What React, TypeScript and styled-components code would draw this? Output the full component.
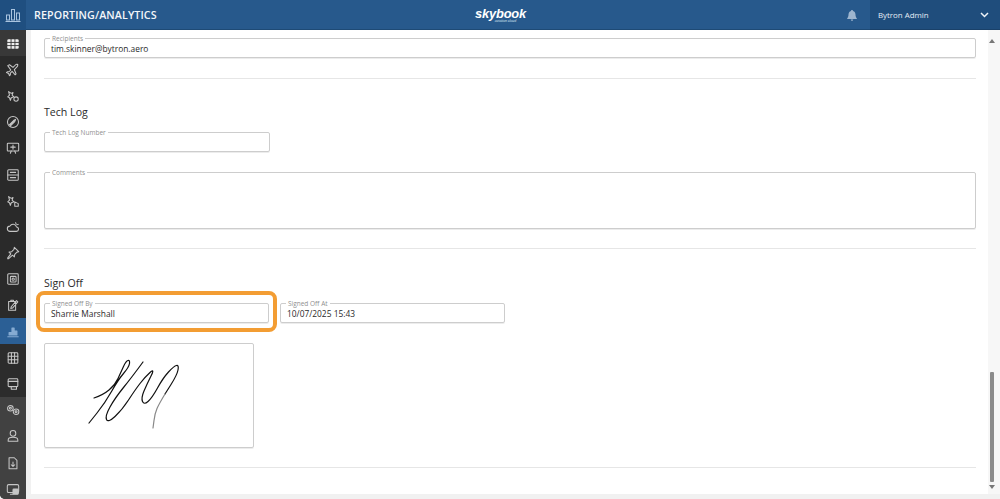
import React from "react";
import styled, { createGlobalStyle } from "styled-components";

const Global = createGlobalStyle`
  html, body { margin: 0; padding: 0; height: 100%; overflow: hidden; background: #f2f2f2; }
  #root { height: 100%; }
  * { box-sizing: border-box; }
`;

const Page = styled.div`
  width: 1000px; height: 499px; display: grid;
  grid-template-rows: 30px 1fr; font-family: "Open Sans", "Liberation Sans", sans-serif;
  color: #2e2e2e; overflow: hidden; background: #f1f1f1;
`;
const Header = styled.header`
  display: flex; align-items: center; background: #27598c;
  box-shadow: inset 0 -1px 0 #1e4a75;
`;
const LogoCell = styled.div`
  width: 26px; height: 30px; display: flex; align-items: center; justify-content: center;
  background: #1f4f80;
`;
const Title = styled.h1`
  margin: 0 0 0 8px; font-size: 10.7px; font-weight: 600; color: #f3f6fa; letter-spacing: .1px; width: 372px;
`;
const Brand = styled.div`
  width: 160px; margin-left: 10px; display: flex; flex-direction: column; align-items: center; color: #fff;
  font-family: "Liberation Sans", sans-serif; font-style: italic; font-weight: 700; font-size: 12.9px; line-height: 11px; letter-spacing: -.2px;
  padding-left: 9px;
`;
const BrandSub = styled.span`
  font-size: 3.5px; line-height: 4px; font-weight: 400; letter-spacing: 0; margin-left: 10px; color: #dbe6f2;
`;
const Bell = styled.div`
  margin-left: auto; width: 40px; padding-left: 4px; display: flex; justify-content: center; color: #9db5cf;
`;
const User = styled.div`
  width: 130px; height: 30px; background: #1f4d7c; display: flex; align-items: center; justify-content: space-between;
  padding: 0 11px 0 8px; font-size: 7.9px; color: #e5ecf4; box-shadow: inset 0 -1px 0 #1a4169;
`;
const Body = styled.div`
  display: grid; grid-template-columns: 26px 1fr; min-height: 0;
`;
const Side = styled.nav`
  display: flex; flex-direction: column; background: #2a2a2a; border-bottom-left-radius: 5px; overflow: hidden;
`;
const Item = styled.div<{ $tone: string; $active?: boolean; $first?: boolean }>`
  height: 26.2px; flex: none; display: flex; align-items: center; justify-content: center; padding-top: 1px;
  background: ${p => p.$tone}; color: ${p => (p.$active ? "#86abd2" : p.$first ? "#f0f0f0" : "#c6c6c6")};
`;
const Main = styled.main`
  margin: 0 0 5px 5px; background: #fff; position: relative; overflow: hidden;
  padding-top: 6px; display: flex; flex-direction: column;
`;
const Scroller = styled.div`
  flex: 1; min-height: 0; overflow: hidden; padding: 2px 24px 0 13px; display: flex; flex-direction: column;
`;
const Field = styled.div<{ $w?: number; $h?: number }>`
  position: relative; width: ${p => (p.$w ? p.$w + "px" : "100%")}; height: ${p => p.$h ?? 20}px; flex: none;
  border: 1px solid #cdcdcd; border-radius: 2px; box-shadow: 0 1px 0 #ececec; padding: 3px 6px 0; font-size: 8.4px; line-height: 13px; color: #2a2a2a;
`;
const Label = styled.span`
  position: absolute; left: 5px; top: -4px; padding: 0 2px; background: #fff; font-size: 6.5px; line-height: 7px; color: #8f8f8f;
`;
const CommentsField = styled(Field)`
  margin-top: 20px;
`;
const Rule = styled.hr<{ $top: number; $bottom: number }>`
  width: 100%; height: 1px; border: 0; flex: none; background: #e6e6e6; margin: ${p => p.$top}px 0 ${p => p.$bottom}px;
`;
const Heading = styled.h2<{ $bottom: number }>`
  margin: 0 0 ${p => p.$bottom}px; height: 16px; font-size: 10.6px; line-height: 16px; font-weight: 400; color: #2b2b2b;
`;
const Row = styled.div`
  display: flex; gap: 11px; position: relative;
`;
const Highlight = styled.div`
  position: absolute; left: -8px; top: -12px; width: 241px; height: 41px; border: 4px solid #f39d33; border-radius: 8px; pointer-events: none;
`;
const Signature = styled.div`
  width: 210px; height: 105px; flex: none; margin-top: 20px; border: 1px solid #cdcdcd; border-radius: 2px; box-shadow: 0 1px 0 #ececec;
  display: flex;
`;
const ScrollBar = styled.div`
  position: absolute; right: 0; top: 0; bottom: 0; width: 12px; background: #f7f7f7;
`;
const Thumb = styled.div`
  position: absolute; left: 2px; width: 4px; top: 342px; height: 110px; background: #8b8b8b; border-radius: 1px;
`;
const Arrow = styled.div<{ $down?: boolean }>`
  position: absolute; left: 1px; width: 0; height: 0; border-left: 3px solid transparent; border-right: 3px solid transparent;
  ${p => (p.$down ? "top: 455px; border-top: 4px solid #777;" : "top: 9px; border-bottom: 4px solid #777;")}
`;

const S = (p: { children: React.ReactNode; size?: number }) => (
  <svg width={p.size ?? 14} height={p.size ?? 14} viewBox="0 0 16 16" fill="none" stroke="currentColor" strokeWidth="1.2" strokeLinecap="round" strokeLinejoin="round">{p.children}</svg>
);
const plane = "M2 3l2-1 4 3 3-3c1-1 2.500-.5 2.500 0s0 1.500-1 2.500l-3 3 2 5-1 1-3.500-4-2 2v2l-1 1-1-2.500-2.500-1 1-1h2l2-2z";
const gears = <><circle cx="5" cy="6" r="3.200"/><circle cx="5" cy="6" r="1.100"/><circle cx="11.500" cy="10" r="3.200"/><circle cx="11.500" cy="10" r="1.100"/></>;
const icons: React.ReactNode[] = [
  <S><rect x="1.500" y="2.500" width="13" height="11" rx="1.500" fill="currentColor" stroke="none"/><path d="M1.500 6.200h13M1.500 9.800h13M5.800 2.500v11M10.200 2.500v11" stroke="#333" strokeWidth="1"/></S>,
  <S><path d={plane}/></S>,
  <S><path d="M3 3l3 2 2-1-1 3 2 2-3 1-1 3-1-3-2-1 2-2z"/><circle cx="11.500" cy="11.500" r="2.500"/></S>,
  <S><circle cx="8" cy="8" r="6.300"/><path d="M4 11l5-5 2-1-1 2.500-5 5" fill="currentColor"/></S>,
  <S><rect x="1.500" y="2.500" width="13" height="9" rx="1"/><path d="M5 14l1-2.500M11 14l-1-2.500M8 4.500v5M5.500 7h5"/></S>,
  <S><rect x="2" y="2" width="12" height="12" rx="1"/><path d="M2 8h12M5 5h6M5 11h6"/></S>,
  <S><path d="M3 3l3 2 2-1-1 3 2 2-3 1-1 3-1-3-2-1 2-2z"/><path d="M10 9l4 2v3h-4z"/></S>,
  <S><path d="M4.500 13a3 3 0 0 1 0-6 4 4 0 0 1 7.500 1 2.500 2.500 0 0 1-.5 5z"/><path d="M11 3l.5 1.500M14 5l-1.500.5"/></S>,
  <S><path d="M9.500 1.500l5 5-2 .5-2.500 2.500-.5 3-2-2L3 14.500l-1 0 0-1 3.500-4.500-2-2 3-.5L9 4z"/></S>,
  <S><rect x="2" y="2" width="12" height="12" rx="1"/><rect x="5" y="5" width="6.500" height="6.500" rx="1"/><circle cx="8.200" cy="8.200" r="1.300"/></S>,
  <S><path d="M3 4h8v10H3zM5.500 4V2.500h3V4M6 10l6-7 1.500 1.500-6 7-2 .5z"/></S>,
  <S><path d="M2 13.500h12M3.500 11.500V8.500h2.500v3zM6.800 11.500V3.500h2.500v8zM10 11.500V7h2.500v4.500z" fill="currentColor"/></S>,
  <S><rect x="2.500" y="2" width="11" height="12" rx="1"/><path d="M6.200 2v12M9.800 2v12M2.500 6h11M2.500 10h11"/></S>,
  <S><rect x="2.500" y="2" width="11" height="9" rx="1"/><path d="M2.500 5h11M6 11v3h6v-3"/></S>,
  <S>{gears}</S>,
  <S><circle cx="8" cy="5" r="3.200"/><path d="M2.500 14v-1.500c0-2 2-3 5.500-3s5.500 1 5.500 3V14z"/></S>,
  <S><path d="M3.500 2h6l3 3v9.500h-9zM8 7v4.500M6 10l2 2 2-2"/></S>,
  <S><rect x="1.500" y="3" width="13" height="9" rx="1.500"/><rect x="8" y="8" width="6" height="6" rx="1" fill="currentColor"/><path d="M5 14h3"/></S>,
];
const tones = ["#383838", "#2a2a2a", "#2a2a2a", "#2a2a2a", "#2a2a2a", "#2a2a2a", "#2a2a2a", "#2a2a2a", "#2a2a2a", "#2a2a2a", "#2a2a2a", "#2b5f95", "#2c2c2c", "#2c2c2c", "#414141", "#414141", "#414141", "#414141"];

const smooth = (pts: number[][]) => {
  let d = `M${pts[0][0]} ${pts[0][1]}`;
  for (let i = 1; i < pts.length - 1; i++) {
    const mx = (pts[i][0] + pts[i + 1][0]) / 2;
    const my = (pts[i][1] + pts[i + 1][1]) / 2;
    d += ` Q${pts[i][0]} ${pts[i][1]} ${mx} ${my}`;
  }
  const l = pts[pts.length - 1];
  return d + ` L${l[0]} ${l[1]}`;
};
const sig1 = [[49,54],[58,51],[70,41],[76,28],[81,17],[85,16],[84,23],[73,36],[60,59],[44,79]];
const sig2 = [[98,18],[87,33],[70,54],[60,72],[63,79],[77,66],[90,46],[100,33],[110,24],[102,40],[96,54],[99,61],[107,54],[118,34],[129,22],[134,21],[132,31],[120,50]];
const sig3 = [[120,50],[114,60],[110,69],[108,84]];

export default function App() {
  return (
    <Page>
      <Global />
      <Header>
        <LogoCell>
          <svg width="16" height="16" viewBox="0 0 16 16" fill="none" stroke="#a9c4df" strokeWidth="1">
            <path d="M.5 14.500h15" />
            <rect x="1.500" y="8" width="3" height="5" />
            <rect x="6.500" y="2.500" width="3" height="10.500" />
            <rect x="11.500" y="6" width="3" height="7" />
          </svg>
        </LogoCell>
        <Title>REPORTING/ANALYTICS</Title>
        <Brand>skybook<BrandSub>aviation cloud</BrandSub></Brand>
        <Bell>
          <svg width="10" height="11" viewBox="0 0 10 11" fill="currentColor"><path d="M5 0c.6 0 1 .4 1 1 1.700.4 2.500 2 2.500 3.500 0 2 .6 3 1.300 3.800V9H.2v-.7C.9 7.500 1.500 6.500 1.500 4.500 1.500 3 2.300 1.400 4 1c0-.6.400-1 1-1zM3.800 9.500h2.400c0 .8-.5 1.300-1.200 1.300s-1.200-.5-1.200-1.300z" /></svg>
        </Bell>
        <User>
          <span>Bytron Admin</span>
          <svg width="9" height="6" viewBox="0 0 9 6" fill="none" stroke="#eef3f8" strokeWidth="1.500"><path d="M1 1l3.500 3.500L8 1" /></svg>
        </User>
      </Header>
      <Body>
        <Side>
          {icons.map((ic, i) => <Item key={i} $tone={tones[i]} $active={i === 11} $first={i === 0}>{ic}</Item>)}
        </Side>
        <Main>
          <Scroller>
            <Field>
              <Label>Recipients</Label>
              tim.skinner@bytron.aero
            </Field>
            <Rule $top={20} $bottom={25} />
            <Heading $bottom={12}>Tech Log</Heading>
            <Field $w={226}><Label>Tech Log Number</Label></Field>
            <CommentsField $h={57}><Label>Comments</Label></CommentsField>
            <Rule $top={19} $bottom={26} />
            <Heading $bottom={12}>Sign Off</Heading>
            <Row>
              <Field $w={225}><Label>Signed Off By</Label>Sharrie Marshall</Field>
              <Field $w={225}><Label>Signed Off At</Label>10/07/2025 15:43</Field>
              <Highlight />
            </Row>
            <Signature>
              <svg width="208" height="103" viewBox="0 0 208 103" fill="none" stroke="#111" strokeWidth="1.200" strokeLinecap="round" strokeLinejoin="round">
                <path d={smooth(sig1)} />
                <path d={smooth(sig2)} />
                <path d={smooth(sig3)} stroke="#888" />
              </svg>
            </Signature>
            <Rule $top={19} $bottom={0} />
          </Scroller>
          <ScrollBar>
            <Arrow />
            <Thumb />
            <Arrow $down />
          </ScrollBar>
        </Main>
      </Body>
    </Page>
  );
}
